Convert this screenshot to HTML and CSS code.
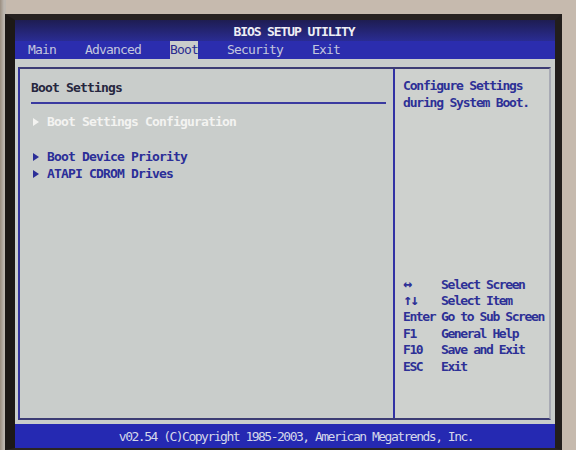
FILE: index.html
```html
<!DOCTYPE html>
<html>
<head>
<meta charset="utf-8">
<link rel="stylesheet" href="styles.css">
</head>
<body>
<div class="monitor">
  <div class="screen">
    <div class="titlebar">BIOS SETUP UTILITY</div>
    <div class="menubar">
      <span class="tab">Main</span>
      <span class="tab">Advanced</span>
      <span class="tab active">Boot</span>
      <span class="tab">Security</span>
      <span class="tab">Exit</span>
    </div>
    <div class="content">
      <div class="panel">
        <div class="left">
          <div class="heading">Boot Settings</div>
          <div class="items">
            <div class="item selected"><span class="tri"></span>Boot Settings Configuration</div>
            <div class="item gap"><span class="tri"></span>Boot Device Priority</div>
            <div class="item"><span class="tri"></span>ATAPI CDROM Drives</div>
          </div>
        </div>
        <div class="right">
          <div class="help">Configure Settings<br>during System Boot.</div>
          <div class="keys">
            <div class="krow"><span class="k"><span class="arw">&#8596;</span></span><span>Select Screen</span></div>
            <div class="krow"><span class="k"><span class="arw">&#8593;&#8595;</span></span><span>Select Item</span></div>
            <div class="krow"><span class="k">Enter</span><span>Go to Sub Screen</span></div>
            <div class="krow"><span class="k">F1</span><span>General Help</span></div>
            <div class="krow"><span class="k">F10</span><span>Save and Exit</span></div>
            <div class="krow"><span class="k">ESC</span><span>Exit</span></div>
          </div>
        </div>
      </div>
    </div>
    <div class="footer">v02.54 (C)Copyright 1985-2003, American Megatrends, Inc.</div>
  </div>
</div>
</body>
</html>
```
FILE: styles.css
```css
html, body {
  margin: 0;
  padding: 0;
  width: 576px;
  height: 450px;
  overflow: hidden;
}
body {
  background: linear-gradient(to right, #9b8e80 0, #bdb7b0 4px, #bdb7b0 6px, #c6baae 6px);
  font-family: "DejaVu Sans Mono", "Liberation Mono", monospace;
  font-weight: bold;
  font-size: 13px;
  letter-spacing: -0.83px;
}
.monitor {
  margin: 14px 14px 0 5px;
  border-top: 6px solid #262120;
  border-left: 10px solid #1d1917;
  border-right: 7px solid #221e1c;
  border-bottom: 2px solid #2a2522;
  background: #1d1917;
}
.screen {
  height: 428px;
  display: flex;
  flex-direction: column;
  background: #c9cdcb;
}
.titlebar {
  height: 21px;
  line-height: 23px;
  background: linear-gradient(#1e1d52, #2a2c92);
  color: #eeeef4;
  text-align: center;
  padding-left: 18px;
  letter-spacing: -1.1px;
}
.menubar {
  height: 18px;
  line-height: 18px;
  background: #2b2dae;
  display: flex;
  gap: 29px;
  padding-left: 13px;
  color: #c3c6de;
  font-weight: normal;
}
.tab.active {
  background: #c9cdcb;
  color: #2a2c90;
}
.content {
  flex: 1;
  padding: 8px 4px 4px 3px;
  display: flex;
}
.panel {
  flex: 1;
  display: flex;
  border: 2px solid #34349c;
  border-top-color: #3c3c74;
  border-right-color: #a8aab4;
  border-bottom-color: #3c3c74;
}
.left {
  width: 373px;
  border-right: 2px solid #3131a4;
}
.heading {
  margin-left: 11px;
  margin-right: 7px;
  padding: 10px 0 6px 0;
  line-height: 17px;
  color: #26263e;
  border-bottom: 2px solid #3a3aa0;
}
.items {
  padding: 9px 0 0 13px;
  line-height: 17px;
  color: #2b2e98;
}
.item {
  display: flex;
  align-items: center;
}
.item.selected {
  color: #f3f3f1;
}
.item.gap {
  margin-top: 18px;
}
.tri {
  width: 0;
  height: 0;
  border-left: 6px solid currentColor;
  border-top: 4px solid transparent;
  border-bottom: 4px solid transparent;
  margin-right: 8px;
}
.right {
  flex: 1;
  display: flex;
  flex-direction: column;
  padding: 8px 0 43px 8px;
  color: #2d3096;
  background: #ced1ce;
}
.help {
  line-height: 17px;
  letter-spacing: -1.2px;
}
.keys {
  margin-top: auto;
  line-height: 16.4px;
  letter-spacing: -1.4px;
}
.krow {
  display: flex;
  height: 16.4px;
}
.k {
  width: 38px;
  flex: none;
}
.arw {
  font-size: 15px;
  line-height: 0;
  letter-spacing: -2px;
}
.footer {
  height: 24px;
  line-height: 26px;
  background: #2529b2;
  color: #d4d7ea;
  text-align: center;
  padding-left: 22px;
  font-weight: normal;
  letter-spacing: -1.5px;
}
```
